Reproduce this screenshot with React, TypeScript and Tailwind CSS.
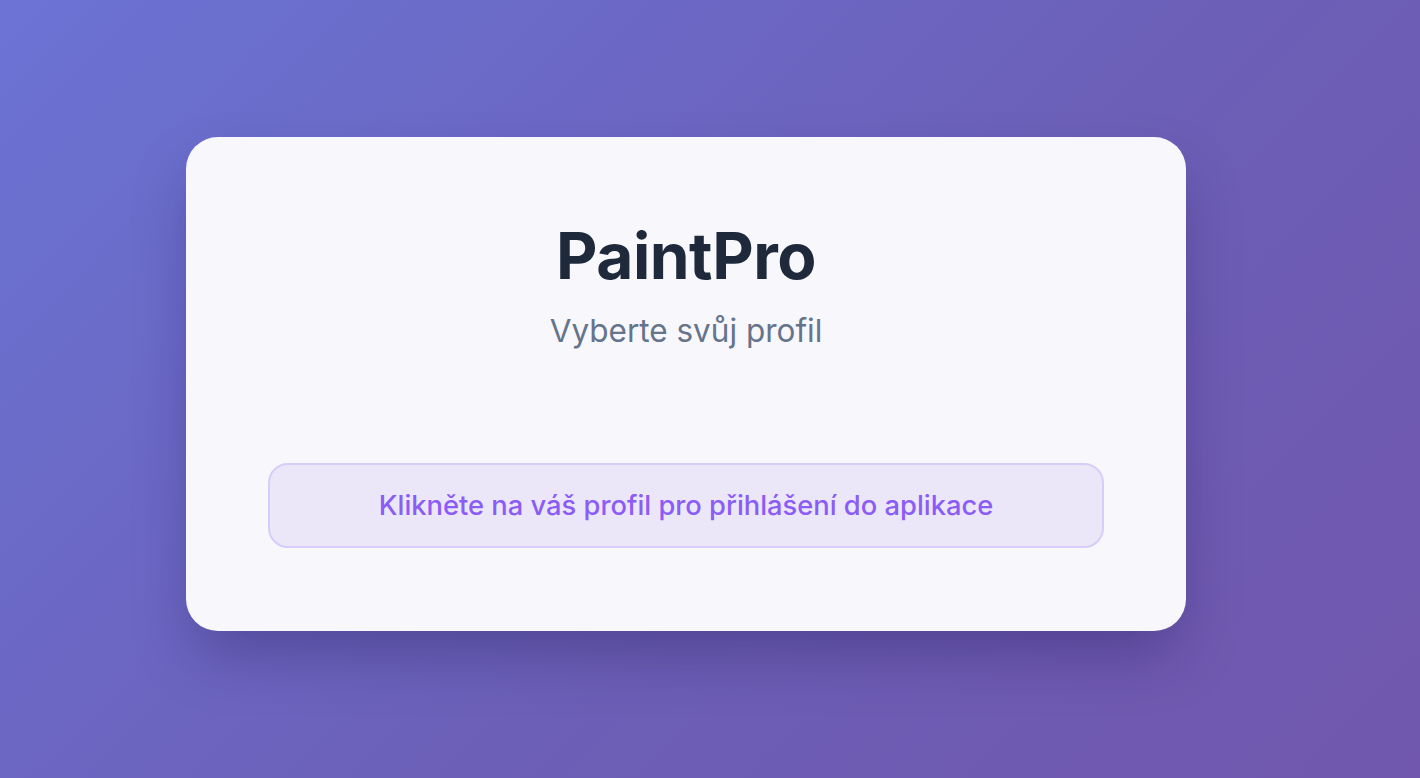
import React from "react";

const App = () => {
  return (
    <div className="min-h-screen w-full flex items-center justify-center pr-12 pb-[10px] bg-[linear-gradient(135deg,#6b73d4_0%,#6c5eb6_60%,#7157ae_100%)] font-['Inter',sans-serif]">
      <div className="w-[1000px] bg-[#f8f7fc] rounded-[32px] shadow-[0_30px_60px_-10px_rgba(30,20,80,0.35)] px-[82px] pt-[80px] pb-[83px]">
        <div className="flex flex-col items-center">
          <h1 className="text-[64px] leading-[77px] font-bold text-[#1e293b] tracking-[-0.5px]">
            PaintPro
          </h1>
          <p className="mt-[17px] text-[31.5px] leading-[40px] text-[#64748b]">
            Vyberte svůj profil
          </p>
        </div>
        <div className="mt-[112px] h-[85px] rounded-[20px] border-2 border-[#d6cdf9] bg-[#ebe7f9] flex items-center justify-center pt-[2px]">
          <p className="text-[27.3px] text-[#8b5cf6] font-medium">
            Klikněte na váš profil pro přihlášení do aplikace
          </p>
        </div>
      </div>
    </div>
  );
};

export default App;
